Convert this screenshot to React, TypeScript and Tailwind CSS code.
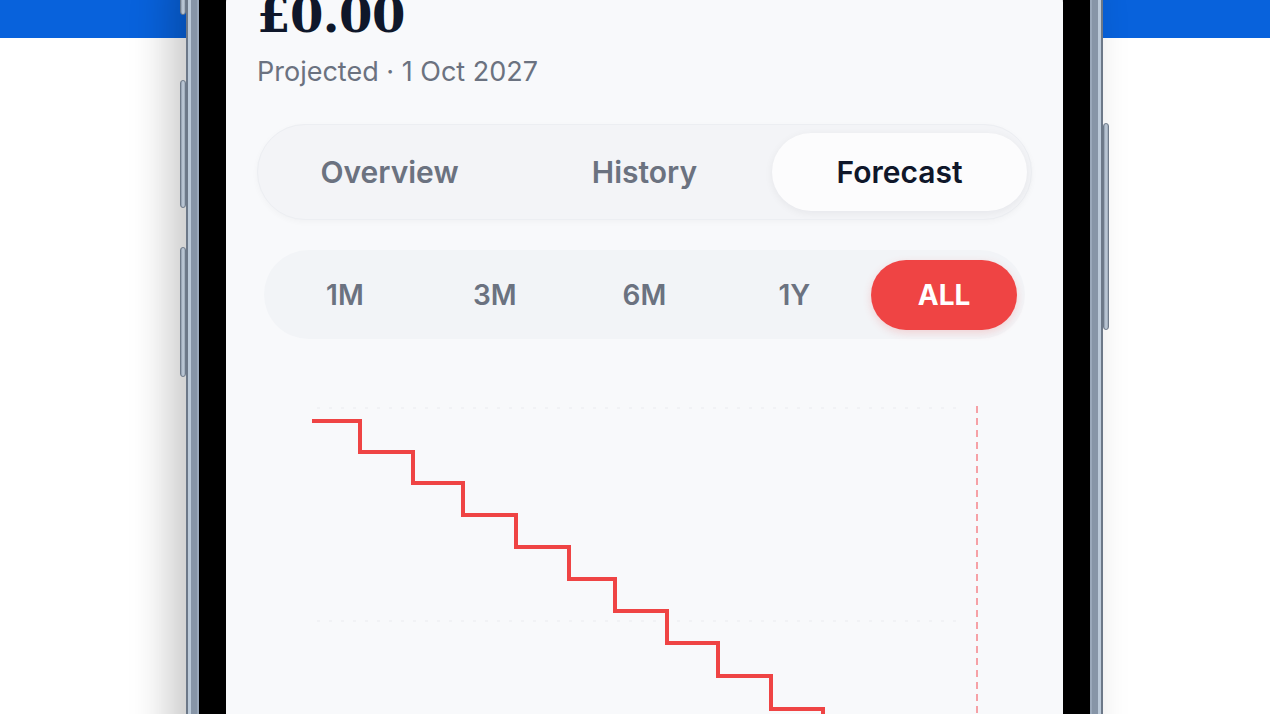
import React from 'react';

const tabs = ['Overview', 'History', 'Forecast'];
const ranges = ['1M', '3M', '6M', '1Y', 'ALL'];

// step line for the forecast chart (pixel coords inside the svg)
const steps = 'M55 40 H103 V71 H156 V102 H206 V134 H259 V166 H312 V198 H358 V230 H410 V262 H461 V295 H514 V328 H566 V360 H618 V392';

const PhoneButton = ({ className }: { className: string }) => (
  <div
    className={`absolute w-[6px] rounded-[3px] border border-[#6f7b8a] bg-[linear-gradient(90deg,#8d9aab,#c3cfdc,#9aa7b7)] ${className}`}
  />
);

export default function App() {
  return (
    <div className="relative h-[714px] w-full overflow-hidden bg-white font-['Inter','Liberation_Sans',sans-serif]">
      {/* page header strip */}
      <div className="h-[38px] bg-[#0862dc]" />

      {/* phone mockup */}
      <div className="absolute left-[186px] top-[-120px] w-[917px]">
        <PhoneButton className="left-[-6px] top-[60px] h-[75px]" />
        <PhoneButton className="left-[-6px] top-[200px] h-[128px]" />
        <PhoneButton className="left-[-6px] top-[367px] h-[130px]" />
        <PhoneButton className="right-[-6px] top-[243px] h-[207px]" />

        <div className="rounded-[120px] bg-[#9aa8ba] p-[13px] shadow-[-16px_10px_40px_rgba(0,0,0,0.22),inset_2px_0_0_#6c7888,inset_-2px_0_0_#6c7888,inset_5px_0_0_#bccad9,inset_-5px_0_0_#bccad9,inset_11px_0_0_#8795a7,inset_-11px_0_0_#8795a7]">
          <div className="rounded-[108px] bg-black p-[27px] pb-0">
            <div className="h-[1000px] rounded-t-[84px] bg-[#f8f9fb] px-[31px] pt-[71px]">
              <div className="font-['DejaVu_Serif',serif] text-[48px] font-bold leading-[48px] tracking-[-0.5px] text-[#0f172a]">
                £0.00
              </div>
              <div className="mt-[15px] text-[27px] leading-[36px] text-[#6b7280]">
                Projected · 1 Oct 2027
              </div>

              {/* view tabs */}
              <div className="mt-[34px] grid h-[96px] grid-cols-3 items-center rounded-full border border-[#eceef2] bg-[#f3f4f7] px-[4px] shadow-[0_2px_6px_rgba(15,23,42,0.03)]">
                {tabs.map((t) => (
                  <div
                    key={t}
                    className={
                      t === 'Forecast'
                        ? 'flex h-[78px] items-center justify-center rounded-full bg-[#fcfcfd] text-[30px] font-semibold text-[#0f172a] shadow-[0_2px_8px_rgba(15,23,42,0.06)]'
                        : 'flex h-[78px] items-center justify-center text-[30px] font-semibold text-[#6b7280]'
                    }
                  >
                    {t}
                  </div>
                ))}
              </div>

              {/* range selector */}
              <div className="mx-[7px] mt-[30px] grid h-[89px] grid-cols-5 items-center rounded-full bg-[#f2f4f7] px-[6px]">
                {ranges.map((r) => (
                  <div
                    key={r}
                    className={
                      r === 'ALL'
                        ? 'mx-[2px] flex h-[70px] items-center justify-center rounded-full bg-[#ef4444] text-[28px] font-bold text-white shadow-[0_3px_8px_rgba(239,68,68,0.2)]'
                        : 'flex h-[70px] items-center justify-center text-[28px] font-semibold text-[#6b7280]'
                    }
                  >
                    {r}
                  </div>
                ))}
              </div>

              {/* forecast chart */}
              <div className="mt-[42px]">
                <svg width="774" height="420" viewBox="0 0 774 420" fill="none">
                  <line x1="60" y1="27" x2="700" y2="27" stroke="#f1f2f5" strokeWidth="2" strokeDasharray="3 9" />
                  <line x1="60" y1="240" x2="700" y2="240" stroke="#f1f2f5" strokeWidth="2" strokeDasharray="3 9" />
                  <line x1="720" y1="25" x2="720" y2="420" stroke="#f6a1a6" strokeWidth="2" strokeDasharray="7 5" />
                  <path d={steps} stroke="#ef4444" strokeWidth="4" strokeLinejoin="miter" />
                </svg>
              </div>
            </div>
          </div>
        </div>
      </div>
    </div>
  );
}
